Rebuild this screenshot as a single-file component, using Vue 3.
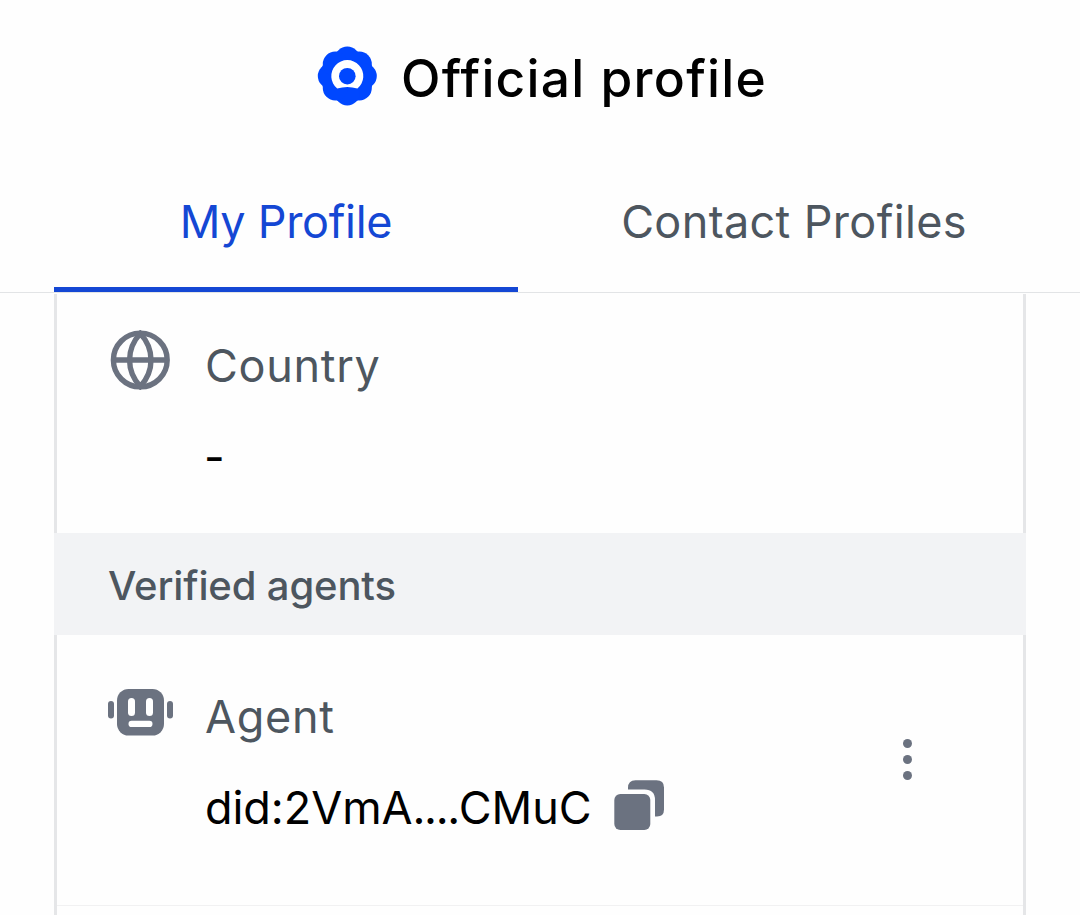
<template>
  <div class="page">
    <header class="header">
      <svg class="badge" viewBox="0 0 60 60">
        <g fill="#0047ff">
          <circle cx="30.3" cy="30" r="26.6" />
          <circle v-for="p in petals" :key="p" cx="30.3" cy="13" r="12.5" :transform="`rotate(${p} 30.3 30)`" />
        </g>
        <path fill="#fff" d="M20.2 42.5A16 16 0 1 1 40.4 42.5Q30.3 39.3 20.2 42.5Z" />
        <circle cx="30.3" cy="30.2" r="8.3" fill="#0047ff" />
      </svg>
      <h1 class="title">Official profile</h1>
    </header>

    <nav class="tabs">
      <button
        v-for="tab in tabs"
        :key="tab.id"
        class="tab"
        :class="[tab.id, { active: activeTab === tab.id }]"
        @click="activeTab = tab.id"
      >
        <span>{{ tab.label }}</span>
      </button>
    </nav>

    <main class="card">
      <section class="row country">
        <svg class="row-icon" viewBox="0 0 66 60" fill="none" stroke="#6b7280" stroke-width="5.4">
          <circle cx="32.3" cy="30" r="26.9" />
          <path d="M5.5 30H59.5M32.3 3.5C18 19 18 41 32.3 56.5C46.6 41 46.6 19 32.3 3.5Z" />
        </svg>
        <div class="info">
          <p class="label">Country</p>
          <p class="value dash">-</p>
        </div>
      </section>

      <h2 class="section-title"><span>Verified agents</span></h2>

      <section class="row agent">
        <svg class="row-icon" viewBox="0 0 66 60">
          <g fill="#6b7280">
            <rect x="0" y="19" width="6" height="17.5" rx="3" />
            <rect x="59" y="19" width="6" height="17.5" rx="3" />
            <rect x="9" y="7" width="47" height="46.5" rx="11.5" />
          </g>
          <g fill="#fff">
            <rect x="20" y="16" width="7" height="18" rx="3.5" />
            <rect x="38" y="16" width="7" height="18" rx="3.5" />
            <rect x="20.5" y="38.8" width="24" height="6.2" rx="3.1" />
          </g>
        </svg>
        <div class="info">
          <p class="label">Agent</p>
          <div class="did-line">
            <p class="value did">did:2VmA<span class="dots">....</span>CMuC</p>
            <button class="copy" @click="copyDid">
              <svg viewBox="0 0 50 50" fill="#6b7280">
                <rect x="0.3" y="14" width="36" height="36" rx="6" />
                <path d="M14 9.5V8Q14 0.3 21.5 0.3H42.5Q50 0.3 50 7.5V29.5Q50 36.5 43 36.5H41V20Q41 9.5 30.5 9.5Z" />
              </svg>
            </button>
          </div>
        </div>
        <button class="more">
          <i></i>
          <i></i>
          <i></i>
        </button>
      </section>
    </main>
  </div>
</template>

<script setup>
import { ref } from 'vue'

const petals = [0, 45, 90, 135, 180, 225, 270, 315]

const tabs = [
  { id: 'mine', label: 'My Profile' },
  { id: 'contacts', label: 'Contact Profiles' }
]
const activeTab = ref('mine')

const copyDid = () => navigator.clipboard?.writeText('did:2VmA....CMuC')
</script>

<style>
body {
  margin: 0;
  background: #fefefe;
}
</style>

<style scoped>
.page {
  display: flex;
  flex-direction: column;
  height: 915px;
  overflow: hidden;
  background: #fefefe;
  font-family: Inter, sans-serif;
}

h1,
h2,
p {
  margin: 0;
  white-space: nowrap;
}

button {
  padding: 0;
  border: none;
  background: none;
  font-family: inherit;
  cursor: pointer;
}

svg {
  display: block;
}

.header {
  display: flex;
  flex: none;
  align-items: center;
  height: 156px;
  padding-left: 317px;
}

.badge {
  width: 60px;
  height: 60px;
  margin: 0 24px 5px 0;
}

.title {
  margin-bottom: 1px;
  color: #000;
  font-size: 51.5px;
  font-weight: 500;
  letter-spacing: 1.25px;
  line-height: 60px;
}

.tabs {
  display: grid;
  flex: none;
  grid-template-columns: 464px 464px;
  gap: 44px;
  box-sizing: border-box;
  height: 137px;
  padding: 0 54px;
  border-bottom: 1px solid #e2e4e6;
}

.tab {
  box-sizing: border-box;
  height: 136px;
  padding-top: 36px;
  border-bottom: 5px solid transparent;
  color: #4d565f;
  display: flex;
  justify-content: center;
  font-size: 45px;
  line-height: 60px;
  white-space: nowrap;
}

.tab.active {
  border-bottom-color: #1447d4;
  color: #1447d4;
}

.tab.mine {
  letter-spacing: -0.3px;
}

.tab.contacts {
  letter-spacing: 0.35px;
}

.card {
  flex: 1;
  margin: 1px 54px 0;
}

.row {
  display: flex;
  box-sizing: border-box;
  padding-left: 51px;
  border: solid #e5e6e8;
  border-width: 0 3px;
}

.row-icon {
  flex: none;
  width: 66px;
  height: 60px;
  margin-right: 31px;
}

.info {
  flex: 1;
}

.label,
.value {
  font-size: 45px;
  line-height: 60px;
}

.label {
  color: #4d565f;
  letter-spacing: 0.7px;
}

.value {
  color: #000;
}

.country {
  height: 239px;
  padding-top: 36px;
}

.country .info {
  padding-top: 6px;
}

.dash {
  margin: 31px 0 0 -1px;
}

.section-title {
  display: flex;
  align-items: center;
  box-sizing: border-box;
  height: 102px;
  padding: 2px 0 0 54px;
  background: #f2f3f5;
  color: #4d565f;
  font-size: 40px;
  font-weight: 500;
  letter-spacing: -0.13px;
}

.agent {
  height: 280px;
  padding-top: 47px;
  background: linear-gradient(#f1f1f2, #f1f1f2) 0 270px / 100% 1px no-repeat;
}

.agent .info {
  padding-top: 5px;
}

.did-line {
  display: flex;
  align-items: center;
  margin-top: 31px;
}

.did {
  width: 409px;
  letter-spacing: -0.05px;
}

.dots {
  letter-spacing: -1.4px;
}

.copy {
  width: 50px;
  height: 50px;
  margin-bottom: 6px;
}

.more {
  display: flex;
  flex-direction: column;
  justify-content: space-between;
  width: 9px;
  height: 41px;
  margin: 57px 111px 0 0;
}

.more i {
  width: 9px;
  height: 9px;
  border-radius: 50%;
  background: #6b7280;
}
</style>
